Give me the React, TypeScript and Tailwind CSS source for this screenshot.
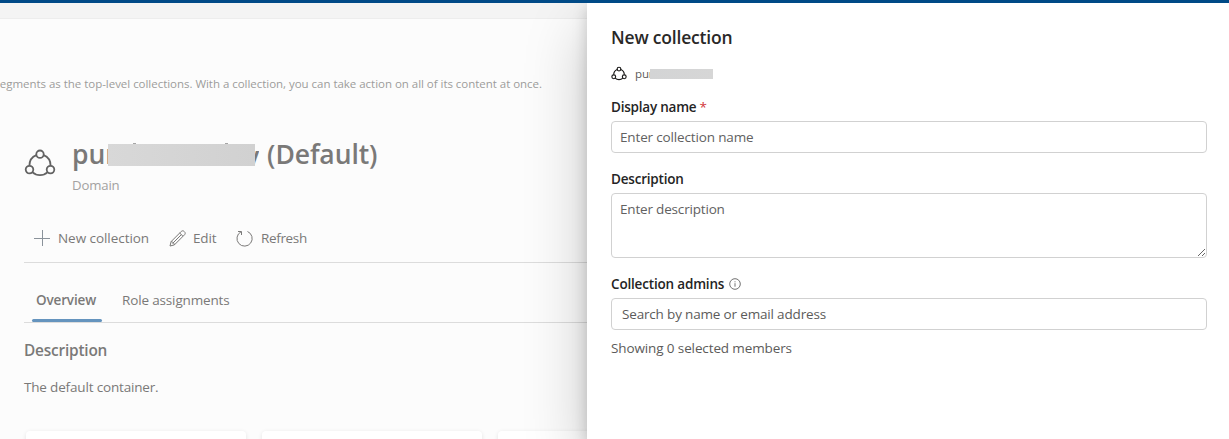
function SharingIcon({ size, stroke }: { size: number; stroke: number }) {
  return (
    <svg width={size} height={size} viewBox="0 0 32 32" fill="none" stroke="currentColor" strokeWidth={stroke} className="block shrink-0">
      <circle cx="16" cy="6.200" r="3.700" />
      <circle cx="5.500" cy="21.600" r="3.800" />
      <circle cx="26.500" cy="21.600" r="3.800" />
      <path d="M12.400 7.100C8.300 8.700 5.400 12.600 5.400 17.700M19.600 7.100C23.700 8.700 26.600 12.600 26.600 17.700M8.300 24.200C10.500 26.200 13 27.200 16 27.200S21.500 26.200 23.700 24.200" />
    </svg>
  );
}

function PlusIcon() {
  return (
    <svg width="16" height="16" viewBox="0 0 16 16" stroke="currentColor" className="block text-[#8a929a]">
      <path d="M0 8.500H16M8.500 0V16" />
    </svg>
  );
}

function PencilIcon() {
  return (
    <svg width="17" height="17" viewBox="0 0 17 17" fill="none" stroke="currentColor" strokeWidth="1" className="block">
      <path d="M1 16L2.100 11.600L12.300 1.400C13.100 0.600 14.300 0.600 15.100 1.400L15.600 1.900C16.400 2.700 16.400 3.900 15.600 4.700L5.400 14.900L1 16ZM10.700 3L14 6.300M2.100 11.600C3.500 11.600 5.400 13.500 5.400 14.900M3.500 13.500L12.300 4.700" />
    </svg>
  );
}

function RefreshIcon() {
  return (
    <svg width="17" height="17" viewBox="0 0 17 17" fill="none" stroke="currentColor" strokeWidth="1" className="block">
      <path d="M11.500 1.500A7.600 7.600 0 1 1 5 1.800M2 1.500H5.500V5" />
    </svg>
  );
}

function InfoIcon() {
  return (
    <svg width="12" height="12" viewBox="0 0 12 12" fill="none" stroke="currentColor" strokeWidth="0.900" className="block text-[#616161]">
      <circle cx="6" cy="6" r="5.300" />
      <path d="M6 5.200V8.700M6 3.300V4.300" />
    </svg>
  );
}

function Backdrop() {
  return (
    <main className="flex w-[587px] shrink-0 flex-col overflow-hidden bg-[#f4f4f4] pt-[15px]">
      <div className="flex flex-1 flex-col border-t border-[#ededed] bg-[#fcfcfc] text-[#7a7978]">
        <div className="flex h-[18px] w-[542px] justify-end mt-[56px] text-[11.5px] leading-[18px] tracking-[-0.03px] whitespace-nowrap text-[#9d9c9b]">
          segments as the top-level collections. With a collection, you can take action on all of its content at once.
        </div>
        <div className="ml-6 mt-[43px] flex h-[62px]">
          <div className="pt-[12px] text-[#636363]">
            <SharingIcon size={32} stroke={1.8} />
          </div>
          <div className="ml-4">
            <h1 className="relative -mt-px flex h-[40px] items-center whitespace-nowrap text-[26.5px] font-semibold tracking-[-0.1px]">
              <span className="w-[36px] overflow-hidden">pur</span>
              <span className="absolute left-[61px] top-[8px] h-[2px] w-[3px] bg-[#a5a5a5]" />
              <span className="absolute left-[153px] top-[8px] h-[2px] w-[3px] bg-[#a5a5a5]" />
              <span className="relative z-10 h-[22px] w-[147px] bg-linear-to-r from-[#d8d8d8] to-[#d1d1d1]" />
              <span className="-ml-[10px] h-[20px] overflow-hidden leading-[22px]">y</span>
              <span className="ml-[8px]">(Default)</span>
            </h1>
            <p className="text-[13.2px] leading-[20px] text-[#a3a2a1]">Domain</p>
          </div>
        </div>
        <div className="ml-6 flex h-[65px] items-center border-b border-[#dcdcdc] pl-[10px] pt-[16px]">
          <div className="flex items-center">
            <PlusIcon />
            <span className="ml-2 w-[103px] tracking-[-0.05px]">New collection</span>
            <span className="ml-2">
              <PencilIcon />
            </span>
            <span className="ml-[7px] w-[43px]">Edit</span>
            <RefreshIcon />
            <span className="ml-2 tracking-[-0.35px]">Refresh</span>
          </div>
        </div>
        <div className="ml-6 flex h-[60px] border-b border-[#dcdcdc] pl-2">
          <div className="flex w-[70px] flex-col items-center justify-end">
            <span className="mb-[9px] mr-[2px] font-semibold leading-[20px] tracking-[-0.15px]">Overview</span>
            <span className="h-[3px] w-full rounded-[1.5px] bg-[#6594be]" />
          </div>
          <span className="mb-[12px] ml-5 self-end leading-[20px]">Role assignments</span>
        </div>
        <h2 className="ml-6 mt-[16px] text-[15.4px] font-semibold leading-[24px] tracking-[-0.2px]">Description</h2>
        <p className="ml-6 mt-[14px] leading-[20px] tracking-[-0.17px]">The default container.</p>
        <div className="ml-[26px] mt-[34px] flex gap-4">
          <div className="h-24 w-[220px] shrink-0 rounded bg-white shadow-[0_1px_4px_rgba(0,0,0,0.1)]" />
          <div className="h-24 w-[220px] shrink-0 rounded bg-white shadow-[0_1px_4px_rgba(0,0,0,0.1)]" />
          <div className="h-24 w-[220px] shrink-0 rounded bg-white shadow-[0_1px_4px_rgba(0,0,0,0.1)]" />
        </div>
      </div>
    </main>
  );
}

function Panel() {
  return (
    <aside className="relative z-10 flex w-[642px] shrink-0 flex-col bg-white pl-6 pr-[22px] text-[#5c5b5a] shadow-[0_26px_58px_rgba(0,0,0,0.22),0_5px_14px_rgba(0,0,0,0.18)]">
      <h2 className="mt-[21px] text-[17.5px] font-semibold leading-[26px] tracking-[-0.2px] text-[#292827]">New collection</h2>
      <div className="mt-[15px] flex h-[18px] items-center text-[11.5px] leading-[18px]">
        <span className="text-[#1b1a19]">
          <SharingIcon size={16} stroke={2.3} />
        </span>
        <span className="ml-2 w-[15px] overflow-hidden">pur</span>
        <span className="h-[10px] w-[63px] bg-linear-to-r from-[#d3d4d5] to-[#d6d6d6]" />
      </div>
      <label className="mt-[14px] font-semibold leading-[20px] tracking-[-0.22px] text-[#242424]">
        Display name<span className="ml-[3px] font-normal text-[#d13438]">*</span>
      </label>
      <input
        className="mt-1 h-8 shrink-0 rounded-[4px] border border-[#d1d1d1] px-2 tracking-[-0.15px] placeholder:text-[#616161]"
        placeholder="Enter collection name"
      />
      <label className="mt-4 font-semibold leading-[20px] tracking-[-0.2px] text-[#242424]">Description</label>
      <textarea
        className="mt-1 h-[65px] shrink-0 resize rounded-[4px] border border-[#d1d1d1] px-2 py-[5px] leading-[20px] tracking-[-0.18px] placeholder:text-[#616161]"
        placeholder="Enter description"
      />
      <label className="mt-4 flex items-center font-semibold leading-[20px] tracking-[-0.18px] text-[#242424]">
        Collection admins
        <span className="ml-[5px]">
          <InfoIcon />
        </span>
      </label>
      <input
        className="mt-1 h-8 shrink-0 rounded-[4px] border border-[#d1d1d1] px-[10px] tracking-[-0.17px] placeholder:text-[#5c5b5a]"
        placeholder="Search by name or email address"
      />
      <p className="mt-[8px] leading-[20px] tracking-[-0.12px]">Showing 0 selected members</p>
    </aside>
  );
}

export default function App() {
  return (
    <div className="flex h-[439px] w-[1229px] flex-col overflow-hidden font-['Open_Sans','Noto_Sans',sans-serif] text-[13.5px] tracking-[-0.15px]">
      <header className="relative z-20 h-[3px] shrink-0 bg-[#004a87]" />
      <div className="flex min-h-0 flex-1 overflow-hidden">
        <Backdrop />
        <Panel />
      </div>
    </div>
  );
}
